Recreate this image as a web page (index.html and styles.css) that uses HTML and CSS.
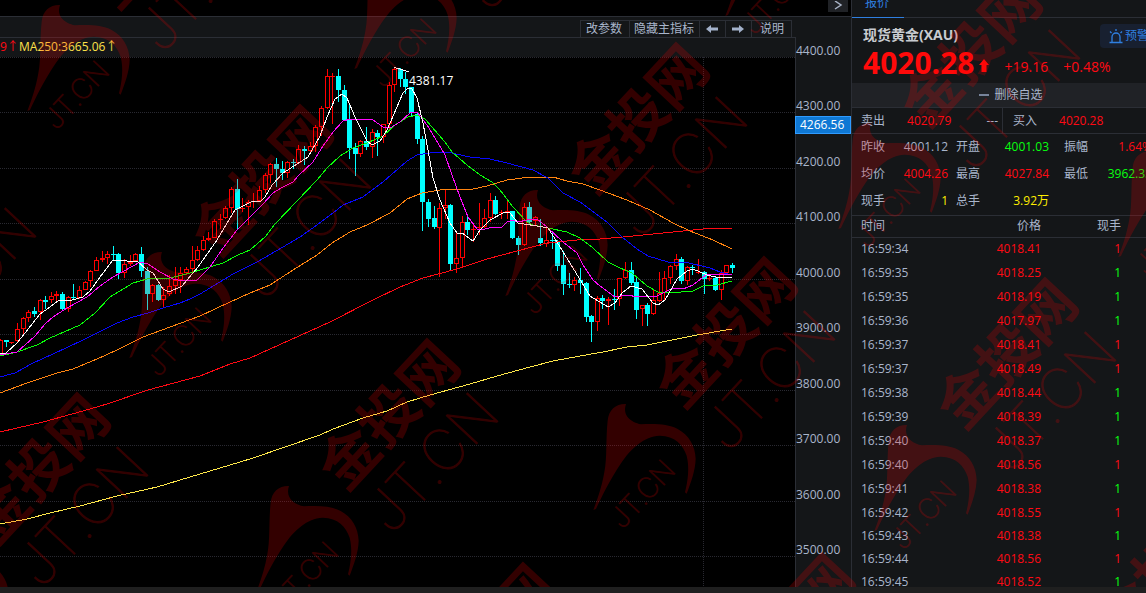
FILE: index.html
```html
<!DOCTYPE html>
<html lang="zh-CN">

<head>
    <meta charset="utf-8">
    <title>现货黄金(XAU)</title>
    <link rel="stylesheet" href="styles.css">
</head>

<body>
    <main class="terminal">
        <section class="chart">
            <div class="topbar">
                <button class="expand" type="button" aria-label="展开">
                    <svg width="10" height="10" viewBox="0 0 10 10"><path d="M2 0L8 4L2 8" fill="none" stroke="#a9b3c6" stroke-width="1.5"/></svg>
                </button>
            </div>
            <div class="chart-body">
                <div class="plot-column">
                    <div class="toolbar">
                        <button class="tool" type="button">改参数</button>
                        <button class="tool" type="button">隐藏主指标</button>
                        <button class="tool arrow" type="button" aria-label="向左">
                            <svg width="12" height="8" viewBox="0 0 12 8"><path d="M0 4L5 0V2.500H12V5.500H5V8Z" fill="#a3b1ca"/></svg>
                        </button>
                        <button class="tool arrow" type="button" aria-label="向右">
                            <svg width="12" height="8" viewBox="0 0 12 8"><path d="M12 4L7 0V2.500H0V5.500H7V8Z" fill="#a3b1ca"/></svg>
                        </button>
                        <button class="tool" type="button">说明</button>
                    </div>
                    <div class="plot">
                        <div class="legend">
                            <span class="ma120">9↑</span>
                            <span class="ma250">MA250:3665.06↑</span>
                        </div>
                        <svg id="kline" class="kline" width="795" height="530" viewBox="0 57 795 530">
                            <g id="grid" class="grid"></g>
                            <g id="candles" shape-rendering="crispEdges"></g>
                            <g id="averages" class="averages"></g>
                            <path class="high-mark" d="M394 67.500L400 69L409 72"/>
                            <text class="high-label" x="409" y="85">4381.17</text>
                        </svg>
                    </div>
                </div>
                <div class="axis">
                    <span>4400.00</span>
                    <span>4300.00</span>
                    <span>4200.00</span>
                    <span>4100.00</span>
                    <span>4000.00</span>
                    <span>3900.00</span>
                    <span>3800.00</span>
                    <span>3700.00</span>
                    <span>3600.00</span>
                    <span>3500.00</span>
                    <b class="cursor-price">4266.56</b>
                </div>
            </div>
        </section>

        <aside class="quote">
            <nav class="tabs"><a class="tab" href="#quote">报价</a></nav>
            <div class="summary">
                <div class="name-row">
                    <h1 class="name">现货黄金(XAU)</h1>
                    <button class="alert" type="button">
                        <svg width="14" height="15" viewBox="0 0 14 15" fill="none" stroke="#2f7fe0" stroke-width="1.3"><path d="M3 13V8A4 4 0 0 1 11 8V13M0.500 13.500H13.500M7 0V2M1 2.500L2.500 4M13 2.500L11.500 4"/></svg>
                        <span>预警</span>
                    </button>
                </div>
                <div class="price-row">
                    <strong class="price">4020.28</strong>
                    <svg class="rise" width="10" height="13" viewBox="0 0 10 13"><path d="M5 0L10 6H7.500V13H2.500V6H0Z" fill="#ff0a0a"/></svg>
                    <span class="change">+19.16</span>
                    <span class="change">+0.48%</span>
                </div>
            </div>
            <button class="favorite" type="button"><i class="minus"></i>删除自选</button>
            <div class="deal">
                <div class="deal-side"><span>卖出</span><span class="up">4020.79</span><span class="lots">---</span></div>
                <div class="deal-side buy"><span>买入</span><span class="up">4020.28</span><span class="lots">---</span></div>
            </div>
            <dl class="stats">
                <div><dt>昨收</dt><dd>4001.12</dd></div>
                <div><dt>开盘</dt><dd class="down">4001.03</dd></div>
                <div><dt>振幅</dt><dd class="up">1.64%</dd></div>
                <div><dt>均价</dt><dd class="up">4004.26</dd></div>
                <div><dt>最高</dt><dd class="up">4027.84</dd></div>
                <div><dt>最低</dt><dd class="down">3962.33</dd></div>
                <div><dt>现手</dt><dd class="volume">1</dd></div>
                <div><dt>总手</dt><dd class="volume">3.92万</dd></div>
            </dl>
            <table class="ticks">
                <thead>
                    <tr><th>时间</th><th>价格</th><th>现手</th></tr>
                </thead>
                <tbody>
                    <tr><td>16:59:34</td><td class="up">4018.41</td><td class="up">1</td></tr>
                    <tr><td>16:59:35</td><td class="up">4018.25</td><td class="down">1</td></tr>
                    <tr><td>16:59:35</td><td class="up">4018.19</td><td class="down">1</td></tr>
                    <tr><td>16:59:36</td><td class="up">4017.97</td><td class="down">1</td></tr>
                    <tr><td>16:59:37</td><td class="up">4018.41</td><td class="up">1</td></tr>
                    <tr><td>16:59:37</td><td class="up">4018.49</td><td class="up">1</td></tr>
                    <tr><td>16:59:38</td><td class="up">4018.44</td><td class="down">1</td></tr>
                    <tr><td>16:59:39</td><td class="up">4018.39</td><td class="down">1</td></tr>
                    <tr><td>16:59:40</td><td class="up">4018.37</td><td class="down">1</td></tr>
                    <tr><td>16:59:40</td><td class="up">4018.56</td><td class="up">1</td></tr>
                    <tr><td>16:59:41</td><td class="up">4018.38</td><td class="down">1</td></tr>
                    <tr><td>16:59:42</td><td class="up">4018.55</td><td class="up">1</td></tr>
                    <tr><td>16:59:43</td><td class="up">4018.38</td><td class="down">1</td></tr>
                    <tr><td>16:59:44</td><td class="up">4018.56</td><td class="up">1</td></tr>
                    <tr><td>16:59:45</td><td class="up">4018.52</td><td class="down">1</td></tr>
                </tbody>
            </table>
        </aside>

        <svg id="watermark" class="watermark" aria-hidden="true"></svg>
    </main>
    <script src="chart.js"></script>
</body>

</html>
```

FILE: styles.css
```css
* {
    box-sizing: border-box;
}

body {
    margin: 0;
    height: 100vh;
    padding-bottom: 6px;
    overflow: hidden;
    background-color: #1f1f1f;
    color: #a9b5cb;
    font-family: "Open Sans", "Noto Sans CJK SC", sans-serif;
    font-size: 12px;
    line-height: 16px;
}

button {
    margin: 0;
    padding: 0;
    border: 0;
    color: inherit;
    font: inherit;
    white-space: nowrap;
}

.terminal {
    position: relative;
    display: flex;
    height: 100%;
    overflow: hidden;
    background-color: #141618;
}

/* chart */
.chart {
    flex: 1;
    min-width: 0;
    display: flex;
    flex-direction: column;
}

.topbar {
    height: 17px;
    display: flex;
    justify-content: flex-end;
    align-items: flex-start;
    padding-right: 3px;
    background-color: #000;
    border-bottom: 1px solid #2b2e35;
}

.expand {
    width: 20px;
    height: 12px;
    background-color: #202226;
    line-height: 0;
}

.chart-body {
    flex: 1;
    min-height: 0;
    display: flex;
}

.plot-column {
    flex: 1;
    min-width: 0;
    display: flex;
    flex-direction: column;
}

.toolbar {
    height: 20px;
    display: flex;
    justify-content: flex-end;
    padding: 3px 4px 0 0;
}

.tool {
    height: 17px;
    padding: 0 5px 0 4px;
    background-color: #141618;
    border: 1px solid #2b2e35;
    border-width: 1px 1px 0 0;
    line-height: 16px;
}

.tool:first-child {
    padding: 0 7px 0 5px;
    border-left-width: 1px;
}

.tool:last-child {
    padding: 0 7px 0 8px;
}

.tool.arrow {
    width: 26px;
    line-height: 0;
}

.plot {
    flex: 1;
    min-height: 0;
    overflow: hidden;
    border-top: 1px solid #2b2e35;
    border-right: 1px solid #2b2e35;
    background-color: #000;
}

.legend {
    height: 19px;
    display: flex;
    gap: 5px;
    background-color: #141618;
    line-height: 18px;
}

.ma120 {
    width: 14px;
    color: #ff0a14;
}

.ma250 {
    color: #ffe24a;
}

.kline {
    display: block;
}

.grid {
    stroke: #292931;
    stroke-dasharray: 1 1;
    shape-rendering: crispEdges;
}

.averages,
.high-mark {
    fill: none;
    stroke: #fff;
    stroke-width: 1px;
    shape-rendering: crispEdges;
}

.high-label {
    fill: #fff;
}

.axis {
    position: relative;
    width: 55px;
    height: 561px;
    display: flex;
    flex-direction: column;
    padding-top: 6px;
}

.axis span {
    flex: 1;
    display: flex;
    align-items: center;
}

.cursor-price {
    position: absolute;
    top: 99px;
    left: -1px;
    right: 0;
    height: 18px;
    padding-left: 4px;
    border: 1px solid #2f9bff;
    background-color: #0f78d4;
    color: #fff;
    font-weight: normal;
}

/* quote panel */
.quote {
    width: 295px;
    overflow: hidden;
    border-left: 1px solid #2b2e35;
}

.tabs {
    height: 18px;
    display: flex;
    align-items: flex-end;
    border-bottom: 1px solid #2b2e35;
}

.tab {
    width: 52px;
    height: 24px;
    margin-bottom: -1px;
    padding-left: 13px;
    border-bottom: 1px solid #2f7fe0;
    color: #2f7fe0;
    text-decoration: none;
    line-height: 18px;
}

.summary {
    height: 65px;
    padding: 6px 0 0 11px;
}

.name-row {
    display: flex;
    justify-content: space-between;
    height: 24px;
}

.name {
    margin: 0;
    color: #c8cbd0;
    font-size: 14px;
    font-weight: 700;
    line-height: 22px;
}

.alert {
    width: 62px;
    height: 24px;
    margin-right: -16px;
    padding-left: 9px;
    display: flex;
    align-items: center;
    gap: 2px;
    border-radius: 4px;
    background-color: #182030;
    color: #2f7fe0;
}

.price-row {
    display: flex;
    align-items: center;
    height: 30px;
    color: #ff0a14;
}

.price {
    color: #ff0a0a;
    font-size: 30px;
    line-height: 30px;
    margin-right: 5px;
}

.rise {
    margin-top: 4px;
}

.change {
    margin-left: 15px;
    padding-top: 8px;
    font-size: 14px;
}

.favorite {
    width: 100%;
    height: 25px;
    padding-left: 24px;
    display: flex;
    align-items: center;
    justify-content: center;
    gap: 5px;
    border-bottom: 1px solid #2b2e35;
    background-color: #202226;
}

.minus {
    width: 10px;
    height: 2px;
    background-color: #77839a;
}

.deal {
    display: flex;
    height: 26px;
    border-bottom: 1px solid #2b2e35;
    line-height: 25px;
}

.deal-side {
    flex: none;
    width: 151px;
    display: flex;
    gap: 22px;
    padding: 0 4px 0 9px;
    border-right: 1px solid #2b2e35;
}

.deal-side.buy {
    width: 160px;
    padding-left: 10px;
}

.lots {
    margin-left: auto;
}

.stats {
    width: 300px;
    margin: 0;
    padding-left: 9px;
    display: grid;
    grid-template-columns: 95px 108px 88px;
    grid-auto-rows: 27px;
    height: 82px;
    border-bottom: 1px solid #2b2e35;
    line-height: 26px;
}

.stats div {
    display: flex;
    justify-content: space-between;
}

.stats div:nth-child(3n+1) {
    padding-right: 8px;
}

.stats div:nth-child(3n+2) {
    padding-right: 15px;
}

.stats dd {
    margin: 0;
}

.up {
    color: #ff0a14;
}

.down {
    color: #08ff10;
}

.stats .volume {
    color: #ffee00;
}

.ticks {
    width: 100%;
    table-layout: fixed;
    border-collapse: collapse;
}

.ticks th {
    height: 21px;
    padding: 0;
    border-bottom: 1px solid #2b2e35;
    font-weight: normal;
    text-align: right;
}

.ticks td {
    height: 24px;
    padding: 0;
    text-align: right;
}

.ticks tr:nth-child(n+12) td {
    height: 23px;
}

.ticks th:first-child,
.ticks td:first-child {
    width: 109px;
    padding-left: 9px;
    text-align: left;
}

.ticks th:nth-child(2) {
    width: 80px;
}

.ticks th:last-child,
.ticks td:last-child {
    padding-right: 25px;
}

/* watermark */
.watermark {
    position: absolute;
    top: 0;
    left: 0;
    width: 100%;
    height: 100%;
    opacity: 0.2;
    fill: #f00;
    pointer-events: none;
}

.mark-name {
    font-family: "Noto Sans CJK SC", sans-serif;
    font-size: 58px;
    font-weight: 700;
}

.mark-site {
    font-family: Inter, sans-serif;
    font-size: 57px;
    font-weight: 100;
    stroke: #f00;
    stroke-width: 1px;
}

.mark-site.small {
    font-size: 28px;
}
```

FILE: chart.js
```js
"use strict";
const UP = "#ff0000";
const DOWN = "#00ffff";
const FIRST_X = 0.7;
const STEP = 5.628;

// direction, high, body top, body bottom, low
const candles = [
    ["u",339,340,355,355],["d",340,340,342,347],["u",342,342,343,344],["u",323,329,341,342],["u",317,318,329,334],
    ["u",310,312,318,322],["d",307,311,314,317],["u",299,300,312,320],["d",296,300,302,309],["u",292,296,300,303],
    ["u",291,294,296,303],["d",292,294,309,310],["u",296,297,309,312],["d",284,297,298,299],["u",286,290,298,299],
    ["u",281,282,290,290],["u",270,271,281,287],["u",257,260,271,271],["u",251,258,260,262],["u",251,254,258,264],
    ["d",246,254,255,260],["d",253,254,273,279],["u",259,264,273,278],["u",255,262,264,266],["u",253,254,261,261],
    ["d",247,254,271,277],["d",267,271,294,310],["u",284,285,294,302],["d",284,285,300,301],["u",287,295,300,308],
    ["u",275,286,294,296],["u",267,280,286,294],["u",267,273,280,293],["u",267,269,273,275],["u",246,260,269,274],
    ["u",246,250,260,261],["u",236,240,250,251],["u",232,238,240,241],["u",219,221,238,238],["u",214,219,220,229],
    ["u",206,208,218,219],["u",187,189,208,213],["d",179,189,209,229],["u",198,208,209,212],["u",200,202,207,225],
    ["u",193,201,202,208],["u",186,190,201,202],["u",173,175,190,193],["u",163,164,175,183],["d",158,164,169,187],
    ["d",161,169,173,180],["u",161,162,173,178],["d",159,162,163,169],["u",145,149,163,164],["d",146,149,151,165],
    ["u",142,146,151,154],["u",125,127,146,152],["u",106,108,127,136],["u",69,76,108,109],["u",73,76,77,124],
    ["d",69,76,90,102],["d",85,90,120,120],["d",103,120,148,159],["d",143,148,154,176],["u",140,141,154,157],
    ["d",127,141,147,150],["u",129,132,147,158],["d",130,133,137,156],["u",124,124,137,143],["u",82,85,124,130],
    ["u",67,69,85,92],["d",68,69,79,87],["d",72,79,87,94],["d",87,87,113,116],["d",112,114,139,144],
    ["d",136,139,202,231],["d",199,202,219,227],["d",206,218,227,229],["u",203,208,228,277],["u",190,205,208,219],
    ["d",204,205,264,270],["u",233,258,264,273],["u",216,222,258,268],["d",214,222,230,235],["u",223,229,230,242],
    ["u",203,227,228,235],["u",209,218,227,228],["u",193,200,218,222],["d",196,200,214,215],["u",210,212,213,219],
    ["u",199,211,212,219],["d",211,211,238,239],["d",236,238,245,255],["u",203,207,245,246],["d",202,207,222,223],
    ["u",216,217,221,225],["d",219,238,243,246],["u",227,240,244,247],["d",233,240,241,249],["d",240,241,266,271],
    ["d",251,265,284,295],["d",273,284,285,288],["u",277,280,285,291],["d",268,280,283,294],["d",282,283,317,322],
    ["d",315,316,322,342],["u",296,298,322,331],["d",295,298,301,309],["u",297,299,301,325],["d",289,299,300,310],
    ["u",278,278,299,306],["u",262,270,278,279],["d",262,270,283,285],["d",276,282,310,319],["u",305,305,309,326],
    ["d",303,305,314,326],["u",289,300,314,315],["u",272,293,301,302],["u",271,278,293,301],["u",265,266,278,284],
    ["u",254,259,266,270],["d",257,259,281,284],["u",266,267,281,285],["d",265,267,268,275],["u",259,272,273,274],
    ["d",271,272,279,294],["u",275,278,279,281],["d",277,278,290,291],["u",270,273,290,300],["u",265,265,273,273],
    ["d",263,265,268,273]
];

const averages = [
    // MA250
    { color: "#ffe84a", points: "0,524 27,519 50,513 80,506 117,496 157,487 200,474 240,462 253,458 320,435 333,429 363,418 387,411 407,402 430,395 470,384 497,376 530,367 553,361 580,356 603,352 627,347 647,345 697,335 732,329" },
    // MA120
    { color: "#ff0a14", points: "0,432 17,428 43,422 83,411 107,404 148,390 200,376 230,364 250,358 290,340 330,322 373,300 400,287 423,278 457,269 487,259 517,251 547,243 577,240 600,239 623,237 673,232 703,229 732,228" },
    // MA60
    { color: "#ff8410", points: "0,393 27,383 57,373 73,369 97,359 117,350 143,337 200,316 230,302 250,293 270,285 293,270 317,255 332,243 350,232 367,225 390,213 407,199 422,193 440,190 473,189 487,186 507,180 530,177 553,177 567,181 583,184 600,190 627,200 650,210 673,223 690,231 713,240 732,249" },
    // MA40
    { color: "#0808ff", points: "0,377 15,373 33,363 53,354 83,340 117,323 133,317 148,313 163,308 180,303 190,299 200,294 210,288 233,274 257,262 283,247 300,237 317,225 333,213 343,205 363,197 383,182 407,161 417,155 430,153 447,152 470,157 490,159 507,163 533,170 548,178 563,193 580,202 607,222 622,237 637,249 648,256 668,262 685,262 710,268 720,272 732,275" },
    // MA20
    { color: "#08ff08", points: "0,356 17,352 37,345 50,338 80,325 95,313 110,297 133,283 147,279 170,278 190,273 223,263 238,255 250,250 265,237 275,224 297,201 317,180 327,168 340,156 353,148 367,143 383,136 395,125 408,117 417,115 425,119 445,142 452,152 467,165 480,175 492,182 500,190 513,207 527,222 533,225 548,228 567,232 580,238 593,248 608,262 620,268 632,273 647,286 658,292 670,293 693,291 703,286 717,285 732,281" },
    // MA10
    { color: "#ff08ff", points: "0,355 17,352 25,345 35,336 45,324 53,317 67,308 87,297 100,286 113,277 133,266 140,262 148,264 160,272 173,279 183,281 197,280 210,267 223,248 237,230 250,217 263,204 273,193 283,187 293,182 298,176 313,162 323,146 333,132 343,121 350,119 373,120 383,127 390,128 400,122 410,113 417,112 427,125 438,143 445,155 452,175 460,197 468,217 477,229 482,230 492,227 502,227 507,222 513,220 518,222 527,220 537,219 547,227 563,242 577,253 583,265 593,280 600,286 615,297 628,295 637,297 657,296 673,288 683,289 693,285 707,274 732,275" },
    // MA5
    { color: "#ffffff", points: "0,354 6,353 17,343 25,333 40,314 50,307 58,301 72,300 83,297 90,291 100,277 113,260 127,261 137,261 147,270 153,273 163,289 169,292 182,286 198,267 217,240 235,210 247,204 253,201 260,202 265,197 272,185 283,173 297,164 308,157 320,136 327,117 335,99 342,94 347,98 355,117 367,141 372,145 380,141 387,130 403,93 408,88 412,89 417,98 423,123 428,150 433,178 440,200 450,223 457,233 462,233 473,241 480,230 490,220 505,212 510,213 518,223 543,227 548,228 557,242 573,268 582,283 590,296 608,307 615,303 622,293 631,286 642,289 653,303 658,305 665,300 677,279 687,271 693,269 707,275 720,278 732,277" }
];

// left/top of every repeated mark
const marks = [
    [0, 0], [327, -42], [698, -95], [-233, 296], [102, 247], [478, 185], [811, 118], [1091, 146],
    [-121, 535], [229, 481], [566, 399], [847, 420], [325, 705], [624, 695], [1004, 633]
];

drawGrid();
drawCandles();
drawAverages();
drawWatermark();

function drawGrid() {
    let html = "";
    for (let i = 0; i < 10; i++) {
        const y = Math.floor(57 + i * 55.5) + 0.5;
        html += `<path d="M0 ${y}H795"/>`;
    }
    html += '<path d="M703.500 57V587"/>';
    document.getElementById("grid").innerHTML = html;
}

function drawCandles() {
    let html = "";
    candles.forEach(function (candle, i) {
        const [dir, high, top, bottom, low] = candle;
        const x = Math.floor(FIRST_X + i * STEP);
        const color = dir === "u" ? UP : DOWN;
        const height = bottom - top;
        html += `<rect x="${x}" y="${high}" width="1" height="${low - high}" fill="${color}"/>`;
        html += `<rect x="${x - 2}" y="${top}" width="5" height="${height}" fill="${color}"/>`;
        //rising candles are hollow
        if (dir === "u" && height > 2) {
            html += `<rect x="${x - 1}" y="${top + 1}" width="3" height="${height - 2}" fill="#000"/>`;
        }
    });
    document.getElementById("candles").innerHTML = html;
}

function drawAverages() {
    document.getElementById("averages").innerHTML = averages
        .map(line => `<polyline points="${line.points}" style="stroke:${line.color}"/>`)
        .join("");
}

function drawWatermark() {
    const horn = "M180 15C150 14 128 32 125 65C119 120 124 175 115 220C107 265 95 300 82 333L90 330C105 298 130 245 165 193C195 148 235 112 280 110C325 109 352 138 362 170C371 205 366 245 357 280L362 284C375 250 388 215 389 180C388 140 368 108 335 90C305 75 270 74 225 76C195 70 168 50 180 15Z";
    document.getElementById("watermark").innerHTML = marks.map(([x, y]) => `
        <g transform="translate(${x} ${y})">
            <path transform="scale(0.3333)" d="${horn}"/>
            <text class="mark-site small" transform="translate(56 131) rotate(-47)">JT.CN</text>
            <text class="mark-name" transform="translate(116 12) rotate(-47)">金投网</text>
            <text class="mark-site" transform="translate(162 55) rotate(-47)">JT.CN</text>
        </g>`).join("");
}
```
